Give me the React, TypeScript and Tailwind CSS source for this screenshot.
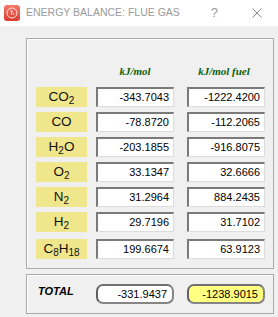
import React from "react";

const Sub = ({ c }: { c: string }) => (
  <sub className="text-[10px] relative top-[3px] align-baseline">{c}</sub>
);

const rows: { label: React.ReactNode; a: string; b: string }[] = [
  { label: <>CO<Sub c="2" /></>, a: "-343.7043", b: "-1222.4200" },
  { label: <>CO</>, a: "-78.8720", b: "-112.2065" },
  { label: <>H<Sub c="2" />O</>, a: "-203.1855", b: "-916.8075" },
  { label: <>O<Sub c="2" /></>, a: "33.1347", b: "32.6666" },
  { label: <>N<Sub c="2" /></>, a: "31.2964", b: "884.2435" },
  { label: <>H<Sub c="2" /></>, a: "29.7196", b: "31.7102" },
  { label: <>C<Sub c="8" />H<Sub c="18" /></>, a: "199.6674", b: "63.9123" },
];

function Field({ v }: { v: string }) {
  return (
    <div className="w-[78px] h-[20px] bg-white border-t-2 border-l-2 border-t-[#7a7a7a] border-l-[#7a7a7a] border-r border-b border-r-[#dcdcdc] border-b-[#dcdcdc] flex items-center justify-end pr-[4px] text-[11px] text-black [font-family:'Liberation_Sans',sans-serif]">
      {v}
    </div>
  );
}

function Pill({ v, yellow }: { v: string; yellow?: boolean }) {
  return (
    <div
      className={`w-[78px] h-[20px] rounded-[7px] border-2 border-[#858585] border-l-[#606060] border-t-[#707070] flex items-center justify-end pr-[5px] text-[11px] text-black [font-family:'Liberation_Sans',sans-serif] ${
        yellow ? "bg-[#ffff80]" : "bg-white"
      }`}
    >
      {v}
    </div>
  );
}

export default function App() {
  return (
    <div className="w-[278px] h-[317px] bg-[#f0f0f0] overflow-hidden">
      <div className="h-[26px] bg-white flex items-center">
        <svg width="16" height="16" viewBox="0 0 16 16" className="ml-[4px]">
          <defs>
            <linearGradient id="g" x1="0" y1="0" x2="0" y2="1">
              <stop offset="0" stopColor="#f47a6a" />
              <stop offset="1" stopColor="#d93a2e" />
            </linearGradient>
          </defs>
          <rect x="0" y="0" width="16" height="16" rx="3" fill="url(#g)" />
          <circle cx="8" cy="8" r="5" fill="none" stroke="#fde2dd" strokeWidth="1" />
          <path d="M6.3 6.2h2.6M7.6 6.2v3.6M8.6 8l1.6 1.8" stroke="#fde2dd" strokeWidth="0.9" fill="none" />
        </svg>
        <span className="ml-[6px] text-[10.5px] text-[#9a9a9a] [font-family:'Liberation_Sans',sans-serif]">
          ENERGY BALANCE: FLUE GAS
        </span>
        <span className="ml-auto text-[13px] text-[#9a9a9a] [font-family:'Liberation_Sans',sans-serif]">?</span>
        <svg width="10" height="10" viewBox="0 0 10 10" className="ml-[34px] mr-[16px]">
          <path d="M0.5 0.5L9.5 9.5M9.5 0.5L0.5 9.5" stroke="#8a8a8a" strokeWidth="1" />
        </svg>
      </div>

      <div className="pl-[26px] pt-[12px]">
        <div className="w-[248px] border border-[#a9a9a9] shadow-[inset_1px_1px_0_#ffffff] pl-[9px] pt-[26px] pb-[9px]">
          <div className="flex h-[13px] leading-[13px] text-[11px] font-bold italic text-[#0b620b] [font-family:'Liberation_Serif',serif]">
            <div className="w-[51px]" />
            <div className="ml-[9px] w-[78px] text-center">kJ/mol</div>
            <div className="ml-[13px] w-[78px] text-center pr-[4px]">kJ/mol fuel</div>
          </div>
          <div className="mt-[9px] flex flex-col gap-[5px]">
            {rows.map((r, i) => (
              <div key={i} className={`flex ${i === rows.length - 1 ? "mt-[2px]" : ""}`}>
                <div className="w-[51px] h-[20px] bg-[#f0e68c] flex items-center justify-center text-[13.5px] text-[#111] [font-family:'Liberation_Sans',sans-serif] leading-none pb-[1px]">
                  <span>{r.label}</span>
                </div>
                <div className="ml-[9px]">
                  <Field v={r.a} />
                </div>
                <div className="ml-[13px]">
                  <Field v={r.b} />
                </div>
              </div>
            ))}
          </div>
        </div>

        <div className="mt-[5px] w-[248px] border border-[#a9a9a9] shadow-[inset_1px_1px_0_#ffffff] pl-[9px] pt-[9px] pb-[9px]">
          <div className="flex">
            <div className="w-[51px] h-[20px] flex items-center pl-[2px] pb-[5px] text-[11px] font-bold italic text-black [font-family:'Liberation_Sans',sans-serif]">
              TOTAL
            </div>
            <div className="ml-[9px]">
              <Pill v="-331.9437" />
            </div>
            <div className="ml-[13px]">
              <Pill v="-1238.9015" yellow />
            </div>
          </div>
        </div>
      </div>
    </div>
  );
}
